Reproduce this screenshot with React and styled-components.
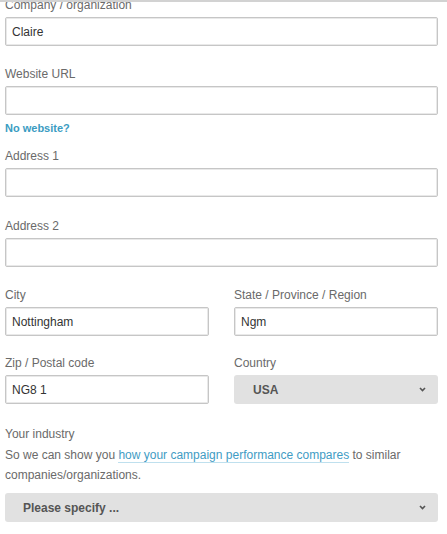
import React from 'react'
import styled, { createGlobalStyle } from 'styled-components'

const GlobalStyle = createGlobalStyle`
  html, body {
    margin: 0;
    padding: 0;
    background: #ffffff;
  }
  body {
    font-family: "Liberation Sans", Arial, Helvetica, sans-serif;
    font-size: 12px;
    color: #666;
    overflow: hidden;
  }
`;

const Page = styled.div`
  width: 447px;
  height: 534px;
  overflow: hidden;
  position: relative;
`;

const TopEdge = styled.div`
  position: absolute;
  top: 0;
  left: 0;
  right: 0;
  height: 2px;
  background: #d2d2d2;
  z-index: 2;
`;

const Form = styled.form`
  display: flex;
  flex-direction: column;
  padding: 0 9px 0 5px;
  margin-top: -3px;
`;

const Field = styled.div`
  display: flex;
  flex-direction: column;
  gap: 4px;
  margin-top: ${p => p.$gap || 0}px;
`;

const Label = styled.label`
  display: block;
  line-height: 16px;
  color: #6a6a6a;
`;

const Input = styled.input`
  box-sizing: border-box;
  width: 100%;
  height: 29px;
  padding: 0 6px;
  border: 1px solid #c6c6c6;
  border-radius: 2px;
  box-shadow: inset 0 0 0 1px #e9e9e9;
  background: #fff;
  font-family: inherit;
  font-size: 12px;
  color: #333;
  outline: none;
`;

const HelpLink = styled.a`
  display: block;
  margin-top: 5px;
  line-height: 16px;
  font-size: 11px;
  font-weight: bold;
  color: #3b9cc2;
  text-decoration: none;
`;

const Row = styled.div`
  display: grid;
  grid-template-columns: 204px 204px;
  column-gap: 25px;
  margin-top: ${p => p.$gap || 0}px;
`;

const Select = styled.div`
  box-sizing: border-box;
  height: 29px;
  display: flex;
  align-items: center;
  justify-content: space-between;
  padding: 0 12px 0 ${p => p.$pad || 18}px;
  background: #e1e1e1;
  border-radius: 3px;
  color: #555;
  font-weight: bold;
  font-size: 12px;
`;

const Chevron = styled.svg`
  width: 7px;
  height: 5px;
  flex: none;
`;

const Hint = styled.p`
  margin: 3px 0 8px;
  line-height: 20px;
  color: #6a6a6a;
`;

const InlineLink = styled.a`
  color: #3f9cc4;
  text-decoration: none;
  border-bottom: 1px solid #bfe0ee;
`;

function Arrow() {
  return (
    <Chevron viewBox="0 0 7 5">
      <path d="M1 1 L3.5 3.6 L6 1" fill="none" stroke="#555" strokeWidth="1.6" />
    </Chevron>
  )
}

export default function App() {
  return (
    <Page>
      <GlobalStyle />
      <TopEdge />
      <Form>
        <Field>
          <Label>Company / organization</Label>
          <Input defaultValue="Claire" />
        </Field>
        <Field $gap={20}>
          <Label>Website URL</Label>
          <Input />
        </Field>
        <HelpLink>No website?</HelpLink>
        <Field $gap={12}>
          <Label>Address 1</Label>
          <Input />
        </Field>
        <Field $gap={21}>
          <Label>Address 2</Label>
          <Input />
        </Field>
        <Row $gap={20}>
          <Field>
            <Label>City</Label>
            <Input defaultValue="Nottingham" />
          </Field>
          <Field>
            <Label>State / Province / Region</Label>
            <Input defaultValue="Ngm" />
          </Field>
        </Row>
        <Row $gap={19}>
          <Field>
            <Label>Zip / Postal code</Label>
            <Input defaultValue="NG8 1" />
          </Field>
          <Field>
            <Label>Country</Label>
            <Select $pad={19}>
              <span>USA</span>
              <Arrow />
            </Select>
          </Field>
        </Row>
        <Field $gap={22}>
          <Label>Your industry</Label>
        </Field>
        <Hint>
          So we can show you <InlineLink>how your campaign performance compares</InlineLink> to similar companies/organizations.
        </Hint>
        <Select>
          <span>Please specify ...</span>
          <Arrow />
        </Select>
      </Form>
    </Page>
  )
}
